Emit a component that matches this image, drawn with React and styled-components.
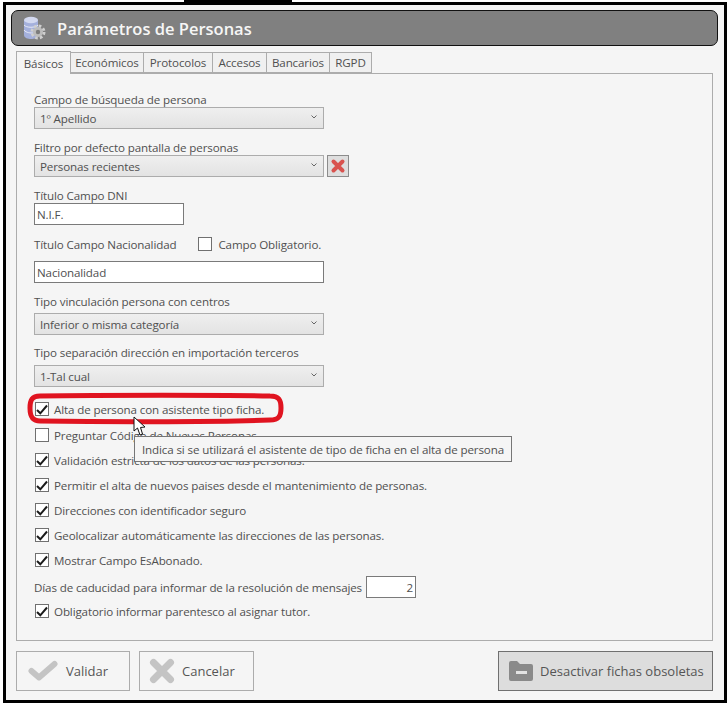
import React from 'react'
import styled, { createGlobalStyle } from 'styled-components'

const Global = createGlobalStyle`
  html, body { margin: 0; padding: 0; background: #fff; }
  body { font-family: "Open Sans", "Noto Sans", sans-serif; font-size: 11.6px; letter-spacing: -0.13px; color: #505050; }
`

const Page = styled.div`
  position: relative;
  width: 727px;
  height: 706px;
  overflow: hidden;
`
const TopStrip = styled.div`
  width: 108px;
  height: 2px;
  margin-left: 184px;
  background: #000;
`
const Frame = styled.div`
  box-sizing: border-box;
  width: 724px;
  height: 701px;
  margin-left: 3px;
  border: 3px solid #000;
  background: #f5f5f5;
  padding: 5px 6px 0 5px;
`
const TitleBar = styled.div`
  box-sizing: border-box;
  display: flex;
  align-items: center;
  gap: 10px;
  width: 707px;
  height: 36px;
  padding-left: 11px;
  background: #808080;
  border: 1px solid #111;
  border-radius: 7px;
  color: #f6f6f6;
  font-size: 16.5px;
  letter-spacing: 0;
  font-weight: 600;
`
const Tabs = styled.div`
  display: flex;
  align-items: flex-end;
  height: 22px;
  margin: 5px 0 0 5px;
`
const Tab = styled.div`
  box-sizing: border-box;
  display: flex;
  align-items: center;
  justify-content: center;
  width: ${p => p.$w}px;
  height: ${p => (p.$active ? 23 : 21)}px;
  margin-bottom: ${p => (p.$active ? -1 : 0)}px;
  border: 1px solid #acacac;
  border-bottom: ${p => (p.$active ? 'none' : '1px solid #acacac')};
  margin-left: ${p => (p.$first ? 0 : -1)}px;
  background: ${p => (p.$active ? '#f5f5f5' : '#f0f0f0')};
  position: relative;
  z-index: ${p => (p.$active ? 1 : 0)};
`
const Panel = styled.div`
  box-sizing: border-box;
  width: 697px;
  height: 568px;
  margin-left: 5px;
  padding: 19px 17px 0;
  border: 1px solid #acacac;
`
const Label = styled.div`
  height: 14px;
  line-height: 14px;
  margin-top: ${p => p.$top || 0}px;
  margin-bottom: ${p => p.$bottom || 0}px;
`
const FieldRow = styled.div`
  display: flex;
  align-items: center;
  gap: 3px;
`
const LabelRow = styled.div`
  display: flex;
  align-items: center;
  gap: 21px;
  height: 14px;
  margin: 12px 0 10px;
`
const Select = styled.div`
  box-sizing: border-box;
  display: flex;
  align-items: center;
  justify-content: space-between;
  width: 290px;
  height: 22px;
  padding: 0 6px 0 5px;
  border: 1px solid #acacac;
  background: linear-gradient(#efefef, #e3e3e3);
`
const Chevron = styled.svg`
  width: 6px;
  height: 4px;
  margin-bottom: 3px;
  fill: none;
  stroke: #666;
  stroke-width: 1;
`
const ClearButton = styled.div`
  box-sizing: border-box;
  display: flex;
  align-items: center;
  justify-content: center;
  width: 22px;
  height: 22px;
  border: 1px solid #8c8c8c;
  background: #dedede;
`
const Input = styled.div`
  box-sizing: border-box;
  display: flex;
  align-items: center;
  justify-content: ${p => (p.$right ? 'flex-end' : 'flex-start')};
  flex: none;
  width: ${p => p.$w}px;
  height: 22px;
  padding: 0 2px;
  border: 1px solid #7a7a7a;
  background: #fff;
`
const Box = styled.span`
  box-sizing: border-box;
  flex: none;
  display: inline-flex;
  align-items: center;
  justify-content: center;
  width: 14px;
  height: 14px;
  border: 1px solid #707070;
  background: #fff;
`
const CheckRow = styled.div`
  display: flex;
  align-items: center;
  gap: 5px;
  height: 16px;
  padding-left: 1px;
  margin-top: ${p => p.$top ?? 9}px;
`
const InlineCheck = styled.div`
  display: flex;
  align-items: center;
  gap: 6px;
  margin-left: 1px;
`
const DaysRow = styled.div`
  display: flex;
  align-items: center;
  gap: 4px;
  height: 22px;
  margin-top: 8px;
`
const Footer = styled.div`
  display: flex;
  gap: 9px;
  width: 697px;
  margin: 10px 0 0 5px;
`
const ActionButton = styled.div`
  box-sizing: border-box;
  display: flex;
  align-items: center;
  gap: ${p => p.$gap}px;
  width: ${p => p.$w}px;
  height: 40px;
  padding-left: ${p => p.$pad}px;
  margin-left: ${p => (p.$push ? 'auto' : 0)};
  border: 1px solid ${p => (p.$enabled ? '#707070' : '#acacac')};
  background: ${p => (p.$enabled ? '#dddddd' : 'transparent')};
  font-size: 13px;
  letter-spacing: 0;
  color: #555;
`
const Tooltip = styled.div`
  position: absolute;
  left: 134px;
  top: 436px;
  box-sizing: border-box;
  display: flex;
  align-items: center;
  width: 378px;
  height: 26px;
  padding-left: 7px;
  background: #f5f5f5;
  border: 1px solid #767676;
  white-space: nowrap;
`
const Overlay = styled.svg`
  position: absolute;
  left: 0;
  top: 0;
  pointer-events: none;
`

const Tick = () => (
  <svg width="12" height="11" viewBox="0 0 12 11">
    <path d="M1 6 L4.3 9.3 L11 1.5" fill="none" stroke="#1a1a1a" strokeWidth="2" />
  </svg>
)

const Check = ({ on = true, children, top }) => (
  <CheckRow $top={top}>
    <Box>{on && <Tick />}</Box>
    <span>{children}</span>
  </CheckRow>
)

const Combo = ({ children }) => (
  <Select>
    <span>{children}</span>
    <Chevron viewBox="0 0 6 4"><path d="M0.5 0.5 L3 3 L5.5 0.5" /></Chevron>
  </Select>
)

const TitleIcon = () => (
  <svg width="24" height="26" viewBox="0 0 24 26">
    <path d="M1 5 V20 C1 23 5 24 8 24 C11 24 15 23 15 20 V5 Z" fill="#a4b0dc" />
    <ellipse cx="8" cy="5" rx="7" ry="3.2" fill="#d3d9f0" />
    <path d="M1 10 C3 13 13 13 15 10 M1 15 C3 18 8 18 10 18" stroke="#e6e9f6" fill="none" />
    <circle cx="15" cy="17" r="6" fill="none" stroke="#cfcfcf" strokeWidth="3" strokeDasharray="2.6 2.1" />
    <circle cx="15" cy="17" r="5" fill="#bdbdbd" />
    <circle cx="15" cy="17" r="2.2" fill="#7b7b7b" />
  </svg>
)

const App = () => {
  const tabs = [
    ['Básicos', 55], ['Económicos', 74], ['Protocolos', 70],
    ['Accesos', 55], ['Bancarios', 64], ['RGPD', 43],
  ]
  return (
    <Page>
      <Global />
      <TopStrip />
      <Frame>
        <TitleBar><TitleIcon />Parámetros de Personas</TitleBar>
        <Tabs>
          {tabs.map(([name, w], i) => (
            <Tab key={name} $w={w} $active={i === 0} $first={i === 0}>{name}</Tab>
          ))}
        </Tabs>
        <Panel>
          <Label>Campo de búsqueda de persona</Label>
          <Combo>1º Apellido</Combo>
          <Label $top={12}>Filtro por defecto pantalla de personas</Label>
          <FieldRow>
            <Combo>Personas recientes</Combo>
            <ClearButton>
              <svg width="16" height="16" viewBox="0 0 16 16">
                <path d="M3.5 3.5 L12.5 12.5 M12.5 3.5 L3.5 12.5" stroke="#d9534f" strokeWidth="4" strokeLinecap="round" />
              </svg>
            </ClearButton>
          </FieldRow>
          <Label $top={12}>Título Campo DNI</Label>
          <Input $w={150}>N.I.F.</Input>
          <LabelRow>
            <span>Título Campo Nacionalidad</span>
            <InlineCheck><Box />Campo Obligatorio.</InlineCheck>
          </LabelRow>
          <Input $w={290}>Nacionalidad</Input>
          <Label $top={12} $bottom={4}>Tipo vinculación persona con centros</Label>
          <Combo>Inferior o misma categoría</Combo>
          <Label $top={11} $bottom={5}>Tipo separación dirección en importación terceros</Label>
          <Combo>1-Tal cual</Combo>
          <Check top={14}>Alta de persona con asistente tipo ficha.</Check>
          <Check on={false} top={10}>Preguntar Código de Nuevas Personas</Check>
          <Check>Validación estricta de los datos de las personas.</Check>
          <Check>Permitir el alta de nuevos paises desde el mantenimiento de personas.</Check>
          <Check>Direcciones con identificador seguro</Check>
          <Check>Geolocalizar automáticamente las direcciones de las personas.</Check>
          <Check>Mostrar Campo EsAbonado.</Check>
          <DaysRow>
            <span>Días de caducidad para informar de la resolución de mensajes</span>
            <Input $w={50} $right>2</Input>
          </DaysRow>
          <Check top={5}>Obligatorio informar parentesco al asignar tutor.</Check>
        </Panel>
        <Footer>
          <ActionButton $w={114} $pad={11} $gap={8}>
            <svg width="30" height="22" viewBox="0 0 30 22">
              <path d="M3.5 11 L11 17.5 L26.5 4" fill="none" stroke="#c4c4c4" strokeWidth="6" strokeLinejoin="round" strokeLinecap="round" />
            </svg>
            Validar
          </ActionButton>
          <ActionButton $w={115} $pad={9} $gap={7}>
            <svg width="26" height="26" viewBox="0 0 26 26">
              <path d="M4.5 4.5 L21.5 21.5 M21.5 4.5 L4.5 21.5" stroke="#c4c4c4" strokeWidth="7" strokeLinecap="round" />
            </svg>
            Cancelar
          </ActionButton>
          <ActionButton $w={215} $pad={9} $gap={6} $enabled $push>
            <svg width="26" height="22" viewBox="0 0 26 22">
              <path d="M1 3 Q1 1 3 1 H9 L12 4 H23 Q25 4 25 6 V19 Q25 21 23 21 H3 Q1 21 1 19 Z" fill="#8a8a8a" />
              <rect x="8" y="11" width="11" height="3" fill="#e2e2e2" />
            </svg>
            Desactivar fichas obsoletas
          </ActionButton>
        </Footer>
      </Frame>
      <Tooltip>Indica si se utilizará el asistente de tipo de ficha en el alta de persona</Tooltip>
      <Overlay width="727" height="706" viewBox="0 0 727 706">
        <path d="M40 396 C100 395 230 395 270 396 C279 396 281 400 281 408 C281 416 279 420 270 420 C200 422 100 422 40 421 C32 421 30 416 30 408 C30 400 32 396 40 396 Z" fill="none" stroke="#e01420" strokeWidth="5" />
        <path d="M134 417 V431 L137.5 428 L140 435 L142.5 434 L140.5 427.5 L145 427 Z" fill="#fff" stroke="#111" strokeWidth="1" />
      </Overlay>
    </Page>
  )
}

export default App
